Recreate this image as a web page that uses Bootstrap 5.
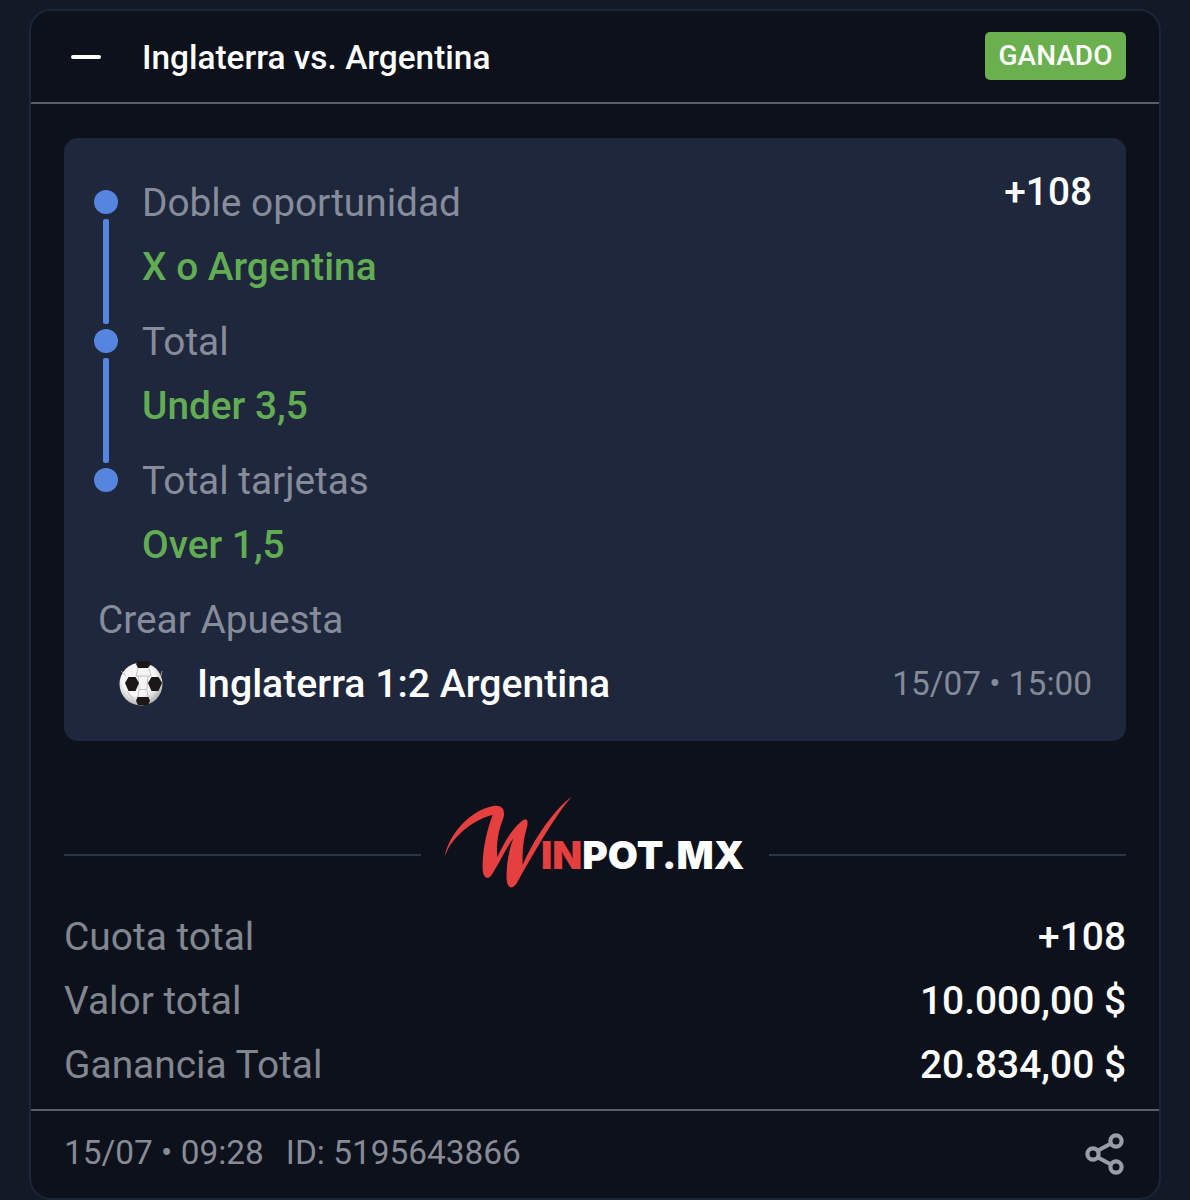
<!DOCTYPE html>
<html lang="es">
<head>
<meta charset="utf-8">
<title>Inglaterra vs. Argentina</title>
<link href="https://cdn.jsdelivr.net/npm/bootstrap@5.3.0/dist/css/bootstrap.min.css" rel="stylesheet">
<style>
html,body{height:1200px;overflow:hidden}
body{background:#131a27;font-family:Roboto,"Liberation Sans",sans-serif;color:#fff;padding:9px 29px 0}
.slip.card{background:#0d111c;border:2px solid #1c2539;border-radius:22px;height:1191px;width:1132px;--bs-card-spacer-x:0;--bs-card-spacer-y:0;color:#fff}
.slip-head.card-header{background:none;border:0;border-bottom:2px solid #5a5e6b;border-radius:0;height:93px;padding:0 33px 0 40px;display:flex;align-items:center}
.dash{width:30px;height:4px;border-radius:2px;background:#fff;margin-right:41px;flex:none}
.slip-title{font-size:33.4px;font-weight:500;flex-grow:1;padding-top:4px}
.won{background:#6ab04f;border-radius:5px;width:141px;height:48px;margin-top:-2px;font-size:28px;font-weight:500;display:flex;align-items:center;justify-content:center}
.slip-body.card-body{padding:34px 33px 0;flex:none}
.panel{background:#1e273b;border-radius:14px;height:603px;padding:33px 34px 0;position:relative}
.leg{height:139px;display:flex}
.rail{width:44px;flex:none;position:relative}
.dot{position:absolute;left:-4px;top:19px;width:24px;height:24px;border-radius:50%;background:#5585dc}
.link{position:absolute;left:5px;top:48px;width:6px;height:105px;background:#5585dc;border-radius:2px}
.lbl{font-size:38.8px;line-height:64px;color:#878c9a}
.val{font-size:38.8px;line-height:64px;color:#62ad54;font-weight:500}
.odds{position:absolute;right:34px;top:33px;font-size:38.8px;line-height:42px;font-weight:500}
.match{height:64px;display:flex;align-items:center}
.match svg{margin:0 34px 0 21px;flex:none}
.match-name{font-size:39.2px;font-weight:500;flex-grow:1}
.when{font-size:33.4px;color:#858a98}
.brand{height:164px;padding-top:46px;display:flex;align-items:flex-start}
.rule{flex-grow:1;height:2px;background:#2a3348;margin-top:67px}
.brand svg{flex:none;margin:-7px -1px 0}
.sum{height:64px;display:flex;justify-content:space-between;align-items:center;font-size:38.9px}
.sum .k{color:#82868f}
.sum .v{font-weight:500}
.slip-foot.card-footer{background:none;border:0;border-top:2px solid #5a5e6b;border-radius:0;margin-top:12px;padding:0 33px;height:86px;display:flex;align-items:center;font-size:33.4px;color:#888b95}
.slip-foot .stamp{margin-right:22px}
.slip-foot svg{margin-left:auto;margin-right:1px;margin-top:2px}
</style>
</head>
<body>
<div class="card slip">
  <div class="card-header slip-head">
    <span class="dash"></span>
    <span class="slip-title">Inglaterra vs. Argentina</span>
    <span class="won">GANADO</span>
  </div>
  <div class="card-body slip-body">
    <div class="panel">
      <div class="leg"><div class="rail"><span class="dot"></span><span class="link"></span></div><div><div class="lbl">Doble oportunidad</div><div class="val">X o Argentina</div></div></div>
      <div class="leg"><div class="rail"><span class="dot"></span><span class="link"></span></div><div><div class="lbl">Total</div><div class="val">Under 3,5</div></div></div>
      <div class="leg"><div class="rail"><span class="dot"></span></div><div><div class="lbl">Total tarjetas</div><div class="val">Over 1,5</div></div></div>
      <div class="odds">+108</div>
      <div class="lbl">Crear Apuesta</div>
      <div class="match">
        <svg width="44" height="46" viewBox="-22 -23 44 46">
          <defs>
            <radialGradient id="bg" cx="45%" cy="38%" r="65%"><stop offset="0.6" stop-color="#f6f6f6"/><stop offset="1" stop-color="#a9a9a9"/></radialGradient>
            <path id="hx" d="M-7-1L-3.500-7H3.500L7-1 3.500 7H-3.500Z"/>
          </defs>
          <circle r="21.500" fill="url(#bg)"/>
          <g fill="none" stroke="#b5b5b5" stroke-width="0.8">
            <path d="M-3-16L-5-8M8-16L10-8M-5-8H9M-3-8L-2 5M7-8L6 5M-2 5.500H6M-2 6L-3 13M6 6L7 13M-14 7L-8 15M19 7L12 15M-15-8L-20-13M20-8L21-13"/>
          </g>
          <g fill="#1b1716">
            <use href="#hx" x="-9" y="0"/>
            <use href="#hx" x="14" y="0"/>
            <path d="M-3.500 13H7.500L9 17 7 21H-3L-5 17Z"/>
            <path d="M-3-23H8L10-20 7-16H-3L-5-20Z"/>
          </g>
        </svg>
        <span class="match-name">Inglaterra 1:2 Argentina</span>
        <span class="when">15/07 • 15:00</span>
      </div>
    </div>
    <div class="brand">
      <div class="rule"></div>
      <svg width="350" height="120" viewBox="0 0 1050 360">
        <path fill="#e5403f" d="M75 228C85 165 150 90 220 78C250 73 258 95 248 120C236 150 228 190 232 232C250 190 280 140 310 120C322 112 326 125 320 145C310 180 306 215 308 255C340 180 400 90 455 50C410 100 340 220 290 310C278 330 262 325 260 300C258 260 265 215 280 175C255 210 235 255 215 285C205 300 190 295 188 270C186 215 200 150 218 105C170 115 110 160 85 205Z"/>
        <text x="363" y="267" font-family="Inter,sans-serif" font-weight="900" font-size="114" textLength="610" lengthAdjust="spacingAndGlyphs"><tspan fill="#e5403f">IN</tspan><tspan fill="#fff">POT.MX</tspan></text>
      </svg>
      <div class="rule"></div>
    </div>
    <div class="sum"><span class="k">Cuota total</span><span class="v">+108</span></div>
    <div class="sum"><span class="k">Valor total</span><span class="v">10.000,00 $</span></div>
    <div class="sum"><span class="k">Ganancia Total</span><span class="v">20.834,00 $</span></div>
  </div>
  <div class="card-footer slip-foot">
    <span class="stamp">15/07 • 09:28</span>
    <span>ID: 5195643866</span>
    <svg width="40" height="42" viewBox="0 0 40 42" fill="none" stroke="#9a9ca6" stroke-width="4.2">
      <path d="M13 17.500L26 10.500M13 24.500L26 31.500"/>
      <circle cx="8" cy="21" r="5.600"/>
      <circle cx="31" cy="8" r="5.600"/>
      <circle cx="31" cy="34" r="5.600"/>
    </svg>
  </div>
</div>
</body>
</html>
